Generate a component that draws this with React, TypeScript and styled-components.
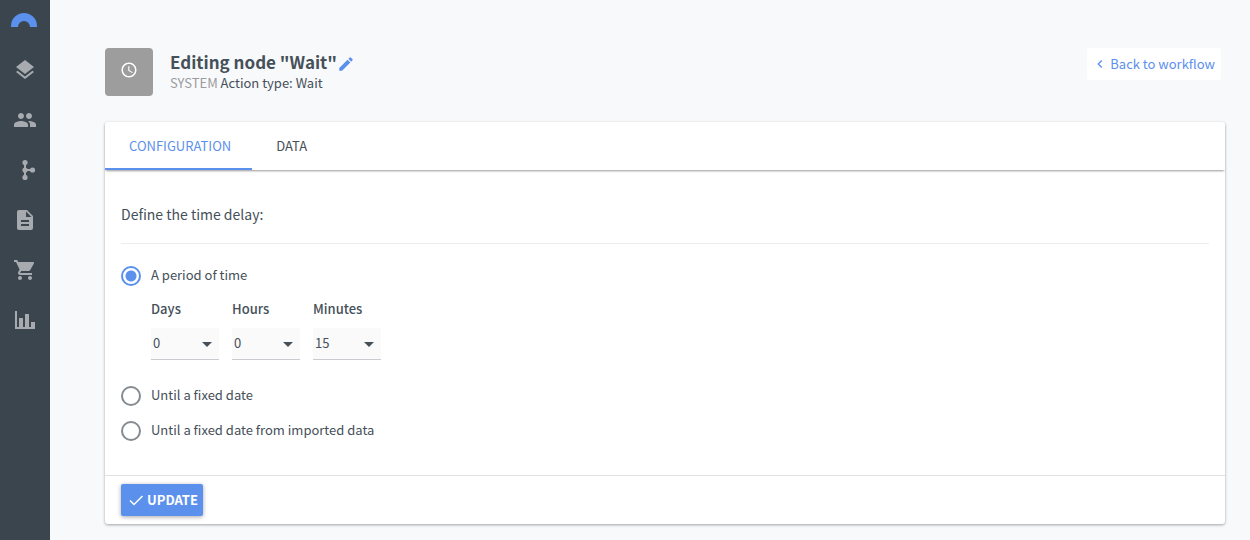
import React, { useState } from "react";
import styled, { createGlobalStyle } from "styled-components";
import {
  MdAccessTime,
  MdArrowDropDown,
  MdChevronLeft,
  MdDescription,
  MdEdit,
  MdLayers,
  MdPeople,
  MdShoppingCart,
} from "react-icons/md";

const color = {
  page: "#f8f9fb",
  rail: "#3b454e",
  railIcon: "#a7abaf",
  text: "#455059",
  muted: "#9b9b9b",
  accent: "#5c90ed",
  line: "#e1e1e1",
};

const GlobalStyle = createGlobalStyle`
  *, *::before, *::after { box-sizing: border-box; }
  body {
    margin: 0;
    background: ${color.page};
    color: ${color.text};
    font: 13px/20px "Noto Sans CJK SC", "Noto Sans", sans-serif;
  }
  button, select { font: inherit; color: inherit; }
  svg { display: block; flex: none; }
`;

const Shell = styled.div`
  display: flex;
  min-height: 100vh;
`;

const Rail = styled.nav`
  flex: none;
  width: 50px;
  background: ${color.rail};
`;

const RailLink = styled.a<{ $logo?: boolean }>`
  display: flex;
  align-items: center;
  justify-content: center;
  height: ${(p) => (p.$logo ? 45 : 50)}px;
  padding: ${(p) => (p.$logo ? "0 2px 5px 0" : "0")};
  color: ${(p) => (p.$logo ? color.accent : color.railIcon)};
`;

const Main = styled.main`
  flex: 1;
  min-width: 0;
  padding: 48px 25px 16px 55px;
`;

const Header = styled.header`
  display: flex;
  align-items: flex-start;
  padding-right: 4px;
  margin-bottom: 26px;
`;

const NodeBadge = styled.div`
  display: flex;
  align-items: center;
  justify-content: center;
  width: 48px;
  height: 48px;
  padding-bottom: 4px;
  margin-right: 17px;
  border-radius: 4px;
  background: #9d9d9d;
  color: #fff;
`;

const Titles = styled.div`
  flex: 1;
`;

const TitleRow = styled.div`
  display: flex;
  align-items: center;
`;

const Title = styled.h1`
  margin: 0;
  font-size: 17px;
  line-height: 28px;
  font-weight: 700;
`;

const IconButton = styled.button`
  margin: 4px 0 0;
  padding: 0;
  border: 0;
  background: none;
  color: ${color.accent};
  cursor: pointer;
`;

const Subtitle = styled.p`
  margin: 0;
  line-height: 14px;
`;

const Muted = styled.span`
  color: ${color.muted};
`;

const BackLink = styled.a`
  display: flex;
  align-items: center;
  gap: 2px;
  height: 32px;
  padding: 0 6px 0 5px;
  border-radius: 2px;
  background: #fff;
  color: ${color.accent};
  text-decoration: none;
`;

const Card = styled.section`
  border-radius: 3px;
  background: #fff;
  box-shadow: 0 1px 3px rgba(0, 0, 0, 0.35);
`;

const Tabs = styled.div`
  display: flex;
  height: 48px;
  box-shadow: 0 2px 2px -1px rgba(0, 0, 0, 0.4);
`;

const Tab = styled.button<{ $active: boolean }>`
  padding: 2px 21px 0 24px;
  border: 0;
  border-bottom: 2px solid ${(p) => (p.$active ? color.accent : "transparent")};
  background: none;
  color: ${(p) => (p.$active ? color.accent : color.text)};
  text-transform: uppercase;
  cursor: pointer;
`;

const Body = styled.div`
  padding: 30px 16px 34px;
`;

const Heading = styled.h2`
  margin: 0 0 22px;
  padding-bottom: 15px;
  border-bottom: 1px solid #ececec;
  font-size: 14px;
  line-height: 28px;
  font-weight: 400;
`;

const Options = styled.div`
  display: flex;
  flex-direction: column;
  gap: 15px;
`;

const RadioLabel = styled.label`
  display: flex;
  align-items: center;
  gap: 10px;
  height: 20px;
  line-height: 18px;
  cursor: pointer;
`;

const RadioText = styled.span`
  padding-bottom: 2px;
`;

const Radio = styled.input`
  appearance: none;
  flex: none;
  width: 20px;
  height: 20px;
  margin: 0;
  border: 2px solid #858b90;
  border-radius: 50%;
  &:checked {
    border-color: ${color.accent};
    background: radial-gradient(circle, ${color.accent} 5px, #fff 6px);
  }
`;

const Delay = styled.div`
  display: flex;
  gap: 13px;
  padding: 13px 0 11px 30px;
`;

const Field = styled.div`
  display: flex;
  flex-direction: column;
  gap: 9px;
  width: 68px;
`;

const FieldLabel = styled.label`
  font-weight: 500;
`;

const SelectBox = styled.div`
  display: grid;
  height: 32px;
  border-bottom: 1px solid #c9cdd1;
  background: #fafafa;
  & > * {
    grid-area: 1 / 1;
  }
  & > svg {
    align-self: center;
    justify-self: end;
    pointer-events: none;
  }
`;

const Select = styled.select`
  appearance: none;
  width: 100%;
  padding: 0 24px 1px 2px;
  border: 0;
  background: none;
`;

const Footer = styled.footer`
  padding: 8px 16px;
  border-top: 1px solid ${color.line};
`;

const UpdateButton = styled.button`
  display: flex;
  align-items: center;
  gap: 2px;
  height: 32px;
  padding: 0 5px 0 6px;
  border: 0;
  border-radius: 2px;
  background: ${color.accent};
  box-shadow: 0 1px 4px rgba(0, 0, 0, 0.35);
  color: #fff;
  font-weight: 700;
  text-transform: uppercase;
  cursor: pointer;
`;

const Logo = () => (
  <svg width="26" height="14" viewBox="0 0 26 14" fill="currentColor">
    <path d="M0 14V13a13 13 0 0 1 26 0v1h-7a6 6 0 0 0-12 0z" />
  </svg>
);

const BranchIcon = () => (
  <svg width="24" height="24" viewBox="0 0 24 24" fill="currentColor" stroke="currentColor">
    <path d="M12 4.500v15M12 12h7.500" strokeWidth="2" fill="none" />
    <g stroke="none">
      <circle cx="12" cy="4.600" r="2.600" />
      <circle cx="12" cy="12" r="2.600" />
      <circle cx="12" cy="19.400" r="2.600" />
      <circle cx="19.500" cy="12" r="2.600" />
    </g>
  </svg>
);

const ChartIcon = () => (
  <svg width="24" height="24" viewBox="0 0 24 24" fill="currentColor">
    <path d="M2 3h2v16h2v-9h4v9h2V6h4v13h2v-5h4v7H2z" />
  </svg>
);

const CheckIcon = () => (
  <svg width="18" height="18" viewBox="0 0 18 18" fill="none" stroke="currentColor" strokeWidth="1.500">
    <path d="M3 9.500l4 4L15.500 5" />
  </svg>
);

const sections = [
  { name: "Layers", icon: <MdLayers size={24} /> },
  { name: "Contacts", icon: <MdPeople size={24} /> },
  { name: "Workflows", icon: <BranchIcon /> },
  { name: "Documents", icon: <MdDescription size={24} /> },
  { name: "Commerce", icon: <MdShoppingCart size={24} /> },
  { name: "Statistics", icon: <ChartIcon /> },
];

const units = [
  { name: "Days", count: 31, initial: 0 },
  { name: "Hours", count: 24, initial: 0 },
  { name: "Minutes", count: 60, initial: 15 },
];

const tabs = ["Configuration", "Data"];

type Mode = "period" | "date" | "imported";

export default function App() {
  const [tab, setTab] = useState(tabs[0]);
  const [mode, setMode] = useState<Mode>("period");

  const option = (value: Mode, text: string) => (
    <RadioLabel>
      <Radio type="radio" name="delay" checked={mode === value} onChange={() => setMode(value)} />
      <RadioText>{text}</RadioText>
    </RadioLabel>
  );

  return (
    <Shell>
      <GlobalStyle />
      <Rail>
        <RailLink href="#home" aria-label="Home" $logo>
          <Logo />
        </RailLink>
        {sections.map((s) => (
          <RailLink key={s.name} href={"#" + s.name.toLowerCase()} aria-label={s.name}>
            {s.icon}
          </RailLink>
        ))}
      </Rail>
      <Main>
        <Header>
          <NodeBadge>
            <MdAccessTime size={18} />
          </NodeBadge>
          <Titles>
            <TitleRow>
              <Title>Editing node "Wait"</Title>
              <IconButton aria-label="Edit name">
                <MdEdit size={18} />
              </IconButton>
            </TitleRow>
            <Subtitle>
              <Muted>SYSTEM</Muted> Action type: Wait
            </Subtitle>
          </Titles>
          <BackLink href="#workflow">
            <MdChevronLeft size={16} />
            Back to workflow
          </BackLink>
        </Header>
        <Card>
          <Tabs role="tablist">
            {tabs.map((t) => (
              <Tab key={t} role="tab" aria-selected={t === tab} $active={t === tab} onClick={() => setTab(t)}>
                {t}
              </Tab>
            ))}
          </Tabs>
          <Body>
            <Heading>Define the time delay:</Heading>
            <Options>
              <div>
                {option("period", "A period of time")}
                <Delay>
                  {units.map((u) => (
                    <Field key={u.name}>
                      <FieldLabel htmlFor={u.name}>{u.name}</FieldLabel>
                      <SelectBox>
                        <Select id={u.name} defaultValue={u.initial}>
                          {Array.from({ length: u.count }, (_, n) => (
                            <option key={n} value={n}>
                              {n}
                            </option>
                          ))}
                        </Select>
                        <MdArrowDropDown size={24} />
                      </SelectBox>
                    </Field>
                  ))}
                </Delay>
              </div>
              {option("date", "Until a fixed date")}
              {option("imported", "Until a fixed date from imported data")}
            </Options>
          </Body>
          <Footer>
            <UpdateButton>
              <CheckIcon />
              Update
            </UpdateButton>
          </Footer>
        </Card>
      </Main>
    </Shell>
  );
}
